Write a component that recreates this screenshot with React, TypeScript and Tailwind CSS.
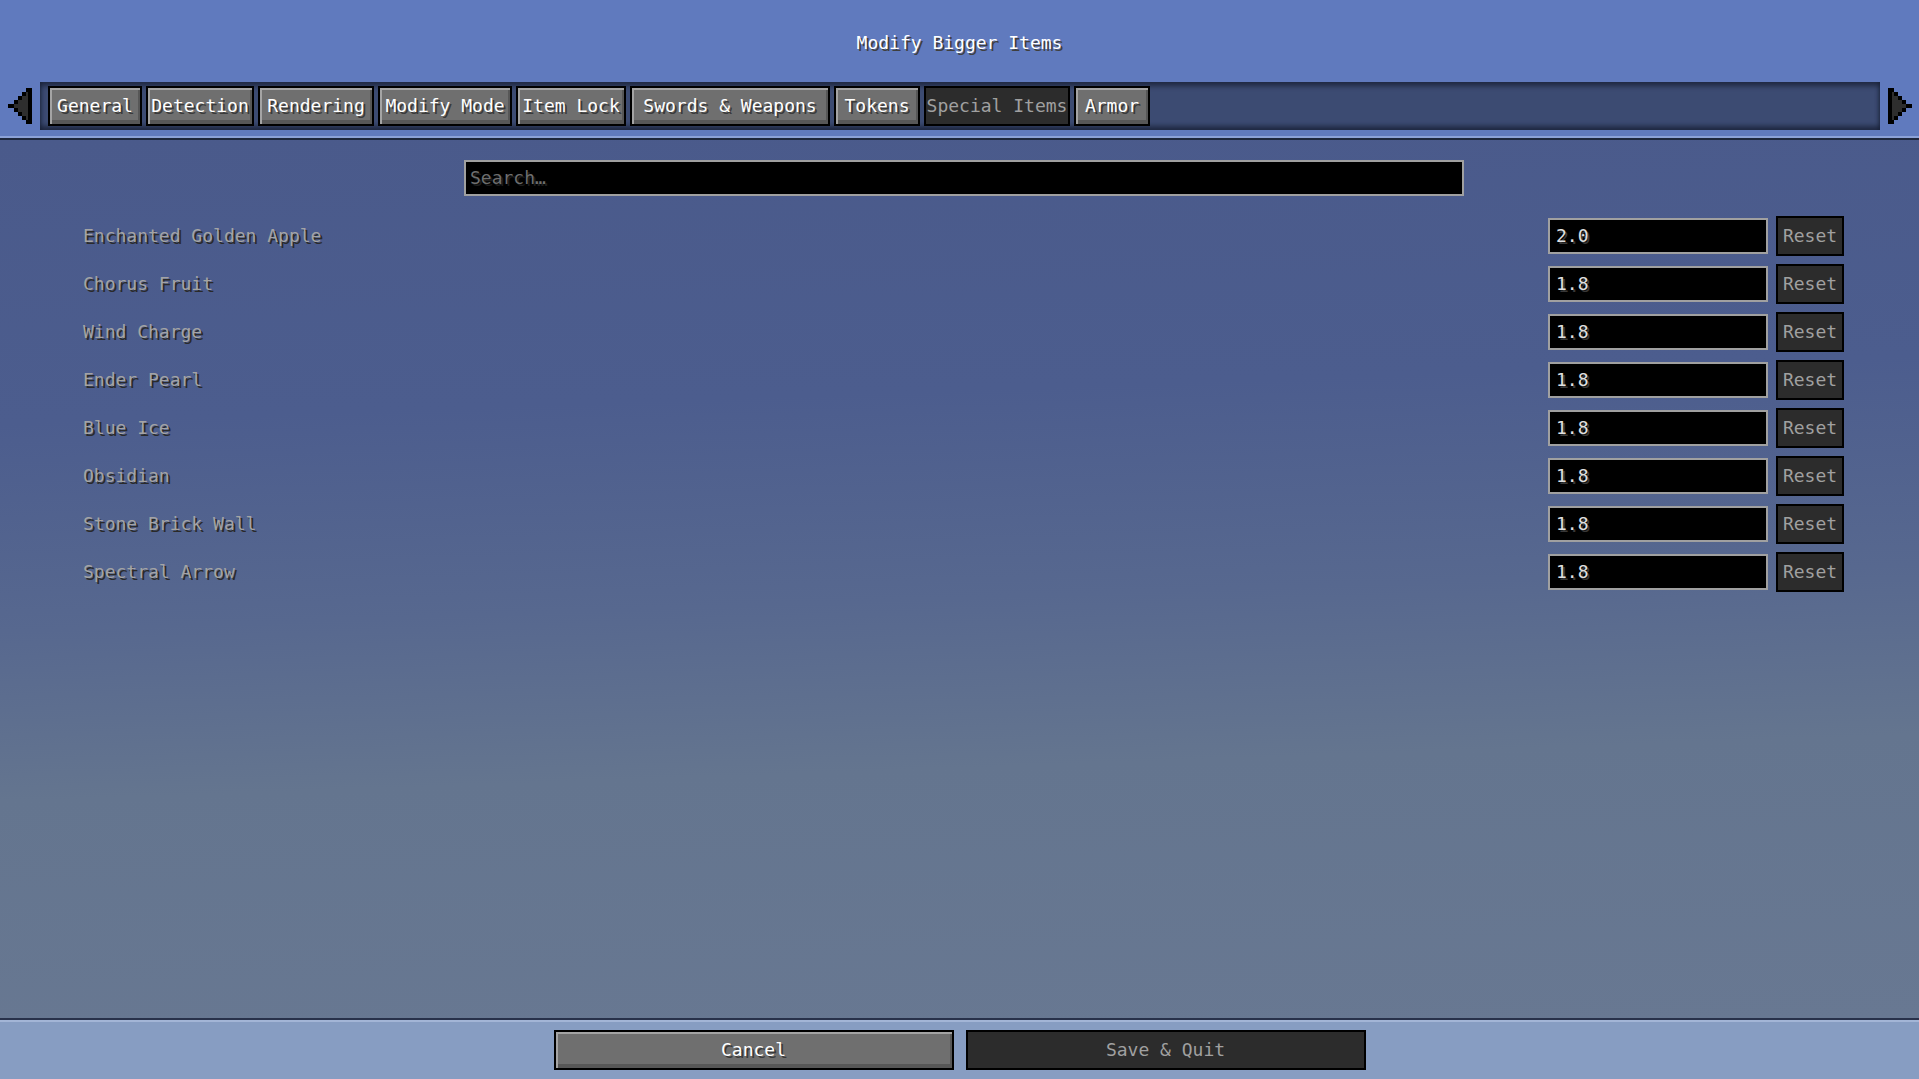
const tabs = [
  { label: "General", w: "w-[94px]" },
  { label: "Detection", w: "w-[108px]" },
  { label: "Rendering", w: "w-[116px]" },
  { label: "Modify Mode", w: "w-[134px]" },
  { label: "Item Lock", w: "w-[110px]" },
  { label: "Swords & Weapons", w: "w-[200px]" },
  { label: "Tokens", w: "w-[86px]" },
  { label: "Special Items", w: "w-[146px]", active: true },
  { label: "Armor", w: "w-[76px]" },
];

const items = [
  { name: "Enchanted Golden Apple", value: "2.0" },
  { name: "Chorus Fruit", value: "1.8" },
  { name: "Wind Charge", value: "1.8" },
  { name: "Ender Pearl", value: "1.8" },
  { name: "Blue Ice", value: "1.8" },
  { name: "Obsidian", value: "1.8" },
  { name: "Stone Brick Wall", value: "1.8" },
  { name: "Spectral Arrow", value: "1.8" },
];

const font = "font-['DejaVu_Sans_Mono',monospace] text-[18px] leading-[20px]";

// stepped pixel arrow, drawn pointing right; flipped for the left one
function Arrow({ flip = false }: { flip?: boolean }) {
  const outer =
    "0,0 6,0 6,4 10,4 10,8 14,8 14,12 18,12 18,16 24,16 24,20 18,20 18,24 14,24 14,28 10,28 10,32 6,32 6,36 0,36";
  const inner =
    "4,4 6,4 6,8 10,8 10,12 14,12 14,16 18,16 18,20 14,20 14,24 10,24 10,28 6,28 6,32 4,32";
  return (
    <svg
      width="24"
      height="36"
      viewBox="0 0 24 36"
      className={flip ? "-scale-x-100" : ""}
      shapeRendering="crispEdges"
    >
      <polygon points={outer} fill="#000" />
      <polygon points={inner} fill="#2e2e2e" />
    </svg>
  );
}

function McButton({
  children,
  className = "",
  disabled = false,
}: {
  children: React.ReactNode;
  className?: string;
  disabled?: boolean;
}) {
  return (
    <div
      className={`flex h-[40px] shrink-0 items-center justify-center whitespace-nowrap border-2 border-black ${font} ${
        disabled
          ? "bg-[#2c2c2c] text-[#a0a0a0]"
          : "bg-[#6f6f6f] text-white shadow-[inset_2px_2px_0_#a4a4a4,inset_-2px_-4px_0_#575757] [text-shadow:2px_2px_0_#3a3a3a]"
      } ${className}`}
    >
      {children}
    </div>
  );
}

export default function App() {
  return (
    <div className="flex h-[1079px] w-full flex-col overflow-hidden select-none">
      {/* header: title + category tabs */}
      <div className="flex h-[136px] shrink-0 flex-col bg-[#607abe]">
        <div
          className={`mt-[33px] text-center text-white [text-shadow:2px_2px_0_#3f3f3f] ${font}`}
        >
          Modify Bigger Items
        </div>
        <div className="mt-[29px] flex items-center">
          <div className="flex w-[40px] justify-start pl-[8px]">
            <Arrow flip />
          </div>
          <div className="flex h-[48px] w-[1840px] items-center gap-[4px] bg-[#3c4b72] pl-[8px] shadow-[inset_0_4px_5px_rgba(10,15,30,0.55),inset_0_-4px_5px_rgba(10,15,30,0.55)]">
            {tabs.map((t) => (
              <McButton key={t.label} className={t.w} disabled={t.active}>
                {t.label}
              </McButton>
            ))}
          </div>
          <div className="pl-[8px]">
            <Arrow />
          </div>
        </div>
      </div>
      <div className="h-[2px] shrink-0 bg-[#8ca2d8]" />
      <div className="h-[2px] shrink-0 bg-[#1e273d]" />

      {/* settings list */}
      <div className="flex flex-1 flex-col bg-[linear-gradient(178deg,#4a5a8b_0%,#4c5d8e_30%,#57688f_52%,#64758f_70%,#687892_100%)]">
        <div className="mt-[20px] pl-[464px]">
          <div className="flex h-[36px] w-[1000px] items-center border-2 border-[#a0a0a0] bg-black pl-[4px]">
            <span className={`text-[#6e6e6e] [text-shadow:2px_2px_0_#1c1c1c] ${font}`}>
              Search…
            </span>
          </div>
        </div>
        <div className="mt-[16px] flex flex-col">
          {items.map((it) => (
            <div key={it.name} className="flex h-[48px] items-center pr-[75px]">
              <div
                className={`flex-1 pl-[83px] text-[#a4a4a4] [text-shadow:2px_2px_0_#2a2a2a] ${font}`}
              >
                {it.name}
              </div>
              <div className="flex h-[36px] w-[220px] items-center border-2 border-[#a0a0a0] bg-black pl-[6px]">
                <span className={`text-[#e0e0e0] [text-shadow:2px_2px_0_#383838] ${font}`}>
                  {it.value}
                </span>
              </div>
              <McButton disabled className="ml-[8px] w-[68px]">
                Reset
              </McButton>
            </div>
          ))}
        </div>
      </div>

      {/* footer actions */}
      <div className="h-[2px] shrink-0 bg-[#28314a]" />
      <div className="h-[2px] shrink-0 bg-[#a3b5d6]" />
      <div className="flex h-[57px] shrink-0 justify-center gap-[12px] bg-[#879dc2] pt-[8px]">
        <McButton className="w-[400px]">Cancel</McButton>
        <McButton disabled className="w-[400px]">
          Save &amp; Quit
        </McButton>
      </div>
    </div>
  );
}
